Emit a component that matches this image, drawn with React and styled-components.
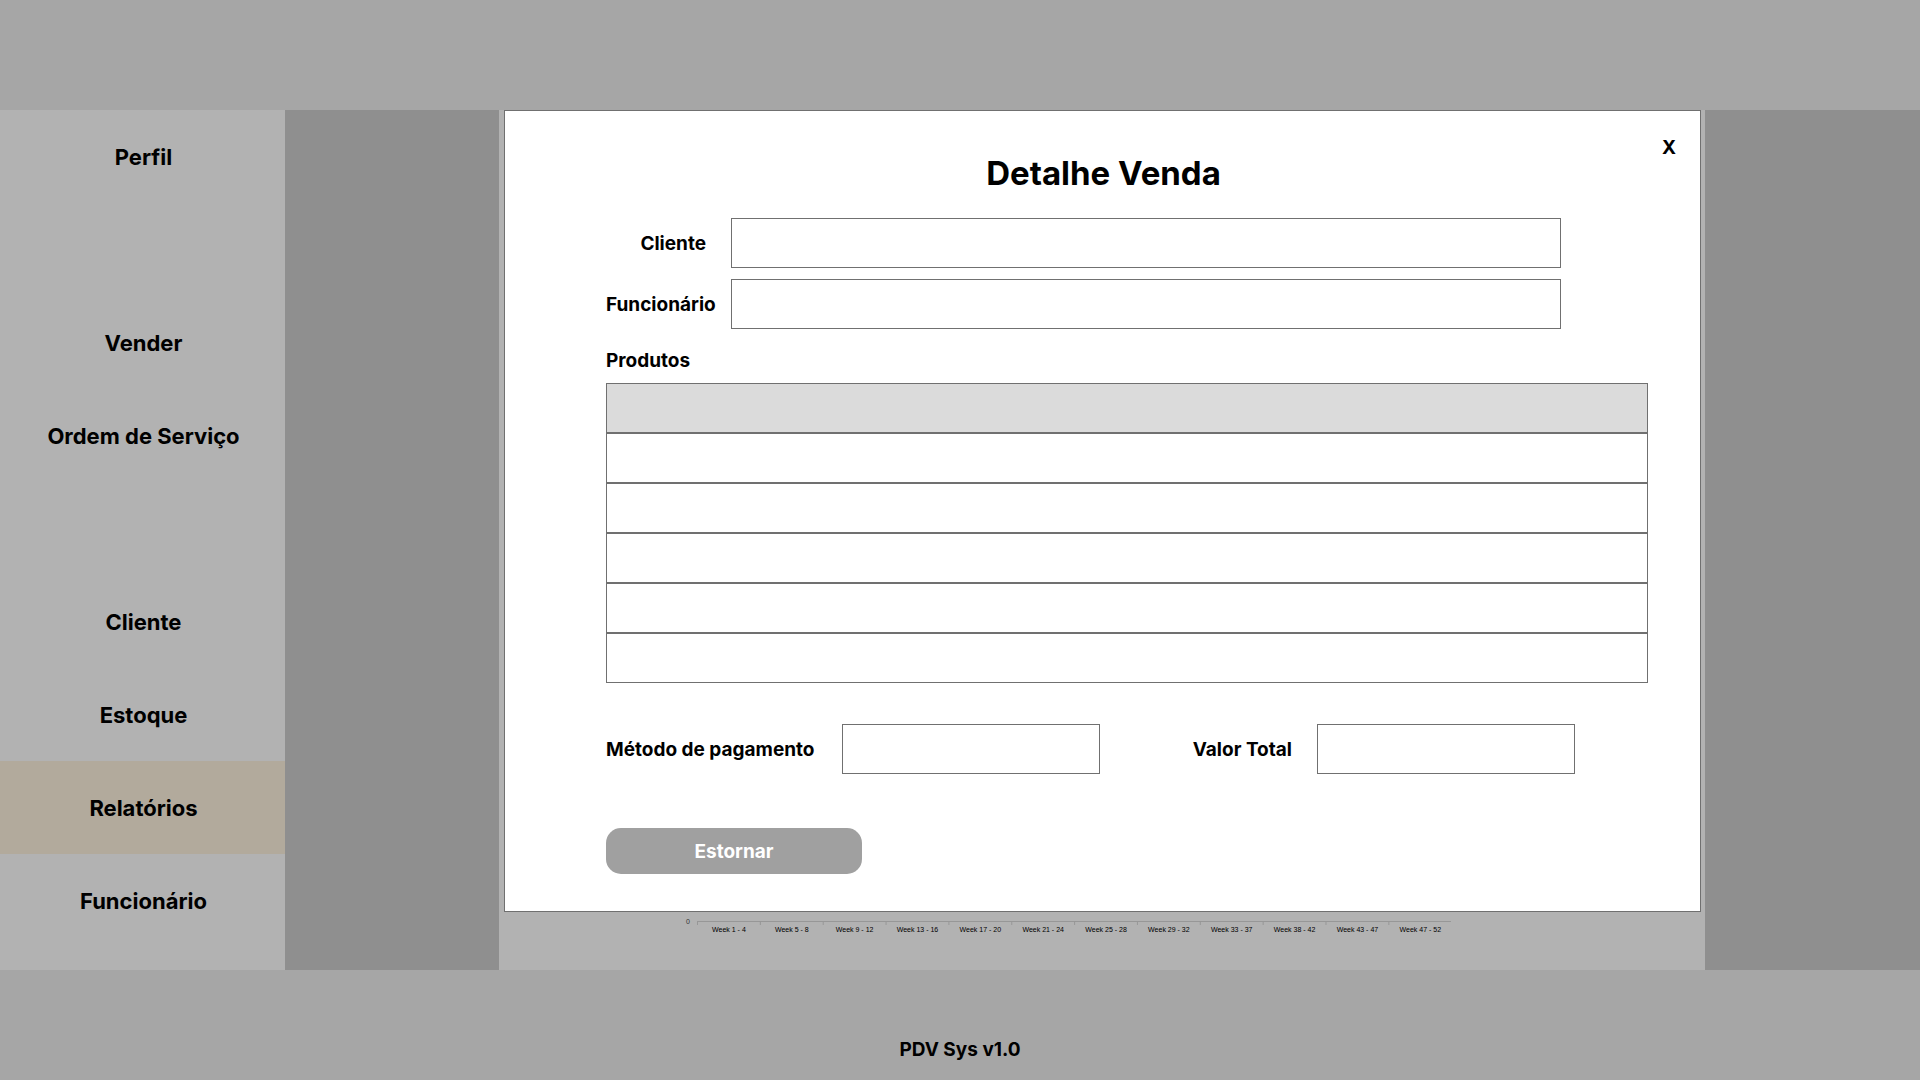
import React from "react";
import styled, { createGlobalStyle } from "styled-components";

const GlobalStyle = createGlobalStyle`
  *, *::before, *::after { box-sizing: border-box; }
  body {
    margin: 0;
    color: #000;
    font-family: Inter, "Liberation Sans", sans-serif;
    font-size: 19px;
    font-weight: 700;
    line-height: 24px;
  }
`;

const Page = styled.div`
  display: flex;
  flex-direction: column;
  min-height: 100vh;
  background: #8f8f8f;
`;

const TopBar = styled.header`
  height: 110px;
  background: #a6a6a6;
`;

const Body = styled.div`
  display: flex;
  flex: 1;
`;

const Sidebar = styled.nav`
  width: 285px;
  background: #b2b2b2;
`;

const Menu = styled.ul`
  display: grid;
  grid-auto-rows: 93px;
  margin: 0;
  padding: 0;
  list-style: none;
`;

const MenuItem = styled.li`
  display: grid;
  grid-row: ${(p) => p.$row};
`;

const MenuLink = styled.a`
  display: flex;
  align-items: center;
  justify-content: center;
  padding-left: 2px;
  background: ${(p) => (p.$active ? "#b2aa9c" : "transparent")};
  color: inherit;
  font-size: 22px;
  text-decoration: none;
`;

const Report = styled.main`
  position: relative;
  display: flex;
  flex: 1;
  flex-direction: column;
  justify-content: flex-end;
  margin: 0 215px 0 214px;
  padding: 0 254px 32px 184px;
  background: #b2b2b2;
`;

const Axis = styled.svg`
  display: block;
  width: 100%;
  font-family: "Liberation Sans", sans-serif;
  font-size: 7px;
  font-weight: 400;
`;

const Dialog = styled.section`
  position: absolute;
  top: 0;
  right: 4px;
  left: 5px;
  padding: 41px 0 37px;
  border: 1px solid #707070;
  background: #fff;
`;

const Title = styled.h1`
  margin: 0 0 24px;
  padding-left: 2px;
  font-size: 33px;
  line-height: 42px;
  text-align: center;
`;

const CloseButton = styled.button`
  position: absolute;
  top: 22px;
  right: 16px;
  width: 30px;
  height: 30px;
  padding: 0;
  border: 0;
  background: none;
  color: inherit;
  font: inherit;
  cursor: pointer;
`;

const Form = styled.form`
  padding: 0 52px 0 101px;
`;

const Fields = styled.div`
  display: grid;
  grid-template-columns: 125px 1fr;
  gap: 11px 0;
  align-items: center;
  padding-right: 87px;
`;

const Label = styled.label`
  justify-self: ${(p) => (p.$end ? "end" : "start")};
  min-width: ${(p) => p.$width || "0"};
  padding-top: 2px;
  padding-right: ${(p) => (p.$end ? "25px" : "0")};
  white-space: nowrap;
`;

const Input = styled.input`
  width: ${(p) => p.$width || "100%"};
  height: 50px;
  padding: 0 12px;
  border: 1px solid #707070;
  border-radius: 0;
  background: #fff;
  font: inherit;
`;

const Products = styled.table`
  width: 100%;
  border-spacing: 0;

  caption {
    padding: 20px 0 10px;
    text-align: left;
  }
`;

const HeadCell = styled.th`
  height: 50px;
  padding: 0;
  border: 1px solid #707070;
  background: #dbdbdb;
`;

const Cell = styled.td`
  height: 50px;
  padding: 0;
  border: 1px solid #707070;
`;

const Summary = styled.div`
  display: flex;
  align-items: center;
  justify-content: space-between;
  margin: 41px 0 54px;
  padding-right: 73px;
`;

const Field = styled.div`
  display: flex;
  align-items: center;
  gap: 25px;
`;

const RefundButton = styled.button`
  display: block;
  width: 256px;
  height: 46px;
  padding: 2px 0 0;
  border: 0;
  border-radius: 15px;
  background: #a0a0a0;
  color: #fff;
  font: inherit;
  cursor: pointer;
`;

const Footer = styled.footer`
  display: flex;
  align-items: flex-end;
  justify-content: center;
  height: 110px;
  padding-bottom: 18px;
  background: #a6a6a6;
`;

const menu = [
  { label: "Perfil", row: 1 },
  { label: "Vender", row: 3 },
  { label: "Ordem de Serviço", row: 4 },
  { label: "Cliente", row: 6 },
  { label: "Estoque", row: 7 },
  { label: "Relatórios", row: 8, active: true },
  { label: "Funcionário", row: 9 },
];

const weeks = [
  "1 - 4", "5 - 8", "9 - 12", "13 - 16", "17 - 20", "21 - 24",
  "25 - 28", "29 - 32", "33 - 37", "38 - 42", "43 - 47", "47 - 52",
];

const STEP = 62.85;
const AXIS_START = 14.5;

function WeekAxis() {
  const end = AXIS_START + STEP * weeks.length;
  return (
    <Axis viewBox="0 0 768 20" role="img" aria-label="Semanas">
      <text x="3" y="6" fill="#333">0</text>
      <path d={`M${AXIS_START} 3.5H${end}`} stroke="#979797" />
      {Array.from({ length: weeks.length + 1 }, (_, i) => (
        <path key={i} d={`M${AXIS_START + i * STEP} 3v4`} stroke="#979797" />
      ))}
      {weeks.map((week, i) => (
        <text key={week} x={AXIS_START + (i + 0.5) * STEP} y="14" textAnchor="middle" fill="#000">
          Week {week}
        </text>
      ))}
    </Axis>
  );
}

export default function App() {
  return (
    <>
      <GlobalStyle />
      <Page>
        <TopBar />
        <Body>
          <Sidebar>
            <Menu>
              {menu.map((item) => (
                <MenuItem key={item.label} $row={item.row}>
                  <MenuLink href="#" $active={item.active}>{item.label}</MenuLink>
                </MenuItem>
              ))}
            </Menu>
          </Sidebar>
          <Report>
            <WeekAxis />
            <Dialog role="dialog" aria-labelledby="titulo">
              <Title id="titulo">Detalhe Venda</Title>
              <CloseButton type="button">X</CloseButton>
              <Form>
                <Fields>
                  <Label htmlFor="cliente" $end>Cliente</Label>
                  <Input id="cliente" type="text" />
                  <Label htmlFor="funcionario">Funcionário</Label>
                  <Input id="funcionario" type="text" />
                </Fields>
                <Products>
                  <caption>Produtos</caption>
                  <thead>
                    <tr><HeadCell scope="col" /></tr>
                  </thead>
                  <tbody>
                    {[1, 2, 3, 4, 5].map((row) => (
                      <tr key={row}><Cell /></tr>
                    ))}
                  </tbody>
                </Products>
                <Summary>
                  <Field>
                    <Label htmlFor="metodo" $width="211px">Método de pagamento</Label>
                    <Input id="metodo" type="text" $width="258px" />
                  </Field>
                  <Field>
                    <Label htmlFor="total">Valor Total</Label>
                    <Input id="total" type="text" $width="258px" />
                  </Field>
                </Summary>
                <RefundButton type="button">Estornar</RefundButton>
              </Form>
            </Dialog>
          </Report>
        </Body>
        <Footer>PDV Sys v1.0</Footer>
      </Page>
    </>
  );
}
